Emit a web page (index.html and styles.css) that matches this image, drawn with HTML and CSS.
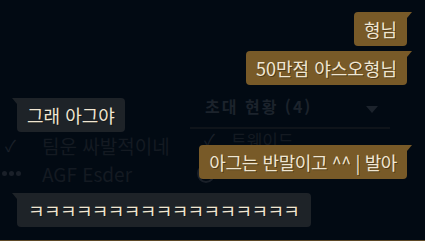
FILE: index.html
```html
<!DOCTYPE html>
<html lang="ko">
<head>
  <meta charset="UTF-8" />
  <meta name="viewport" content="width=device-width, initial-scale=1.0"/>
  <title>채팅</title>
  <link rel="stylesheet" href="styles.css">
</head>
<body>

  <div class="stage">

    <!-- 뒤에 흐릿하게 보이는 로비 화면 -->
    <div class="backdrop">
      <div class="invite">
        <span class="invite-title">초대 현황 (4)</span>
        <span class="caret"></span>
      </div>

      <div class="friends">
        <div class="friend">
          <span class="f-icon">✓</span>
          <span class="f-name">팀운 싸발적이네</span>
        </div>
        <div class="friend friend-right">
          <span class="f-icon">✓</span>
          <span class="f-name">트웨이드</span>
        </div>
        <div class="friend">
          <span class="f-icon dots"><i></i><i></i><i></i></span>
          <span class="f-name">AGF Esder</span>
        </div>
        <div class="friend friend-right second">
          <span class="f-icon"><span class="ring"></span></span>
          <span class="f-name"></span>
        </div>
      </div>
    </div>

    <!-- 채팅 말풍선 -->
    <div class="chat">
      <div class="msg me">형님</div>
      <div class="msg me">50만점 야스오형님</div>
      <div class="msg them">그래 아그야</div>
      <div class="msg me tight">아그는 반말이고 ^^ | 발아</div>
      <div class="msg them kk">ㅋㅋㅋㅋㅋㅋㅋㅋㅋㅋㅋㅋㅋㅋㅋㅋㅋ</div>
    </div>

  </div>

</body>
</html>
```

FILE: styles.css
```css
* {
  margin: 0;
  padding: 0;
  box-sizing: border-box;
  font-family: 'Noto Sans CJK KR', 'Noto Sans', sans-serif;
}

body, html {
  height: 100%;
  overflow: hidden;
  background-color: #010a13;
}

.stage {
  display: grid;
  width: 425px;
  height: 241px;
  background-color: #020a13;
  border-bottom: 1px solid #5e4a28;
}

/* 배경 로비 */
.backdrop {
  grid-area: 1 / 1;
  display: flex;
  flex-direction: column;
  padding-top: 92px;
}

.invite {
  margin-left: 190px;
  width: 200px;
  height: 37px;
  display: flex;
  align-items: flex-start;
  justify-content: space-between;
  padding: 3px 12px 0 15px;
  border-bottom: 2px solid #0f141a;
}

.invite-title {
  color: #1c232c;
  font-size: 16px;
  font-weight: bold;
  line-height: 22px;
  letter-spacing: 2px;
}

.caret {
  width: 0;
  height: 0;
  margin-top: 11px;
  border-left: 6px solid transparent;
  border-right: 6px solid transparent;
  border-top: 7px solid #1c232c;
}

.friends {
  display: grid;
  grid-template-columns: 190px 1fr;
  grid-auto-rows: 28px;
  padding-top: 2px;
}

.friend {
  display: flex;
  align-items: center;
  color: #141a22;
  font-size: 19px;
}

.f-icon {
  width: 42px;
  padding-left: 5px;
  color: #1a2029;
  font-size: 16px;
}

.dots {
  display: flex;
  gap: 2px;
  padding-left: 2px;
}

.dots i {
  width: 5px;
  height: 5px;
  border-radius: 50%;
  background-color: #1a2029;
}

.friend-right {
  margin-top: -12px;
  margin-left: 8px;
  font-size: 17px;
}

.friend-right.second {
  margin-top: 0;
}

.friend-right .f-icon {
  width: 33px;
  padding-left: 6px;
}

.ring {
  display: block;
  width: 18px;
  height: 19px;
  margin-left: -7px;
  margin-top: 0;
  border: 2px solid #1a2029;
  border-radius: 50%;
}

/* 채팅 */
.chat {
  grid-area: 1 / 1;
  display: flex;
  flex-direction: column;
  align-items: flex-start;
  padding: 12px 18px 0 17px;
}

.msg {
  position: relative;
  padding: 6px 10px;
  line-height: 22px;
  font-size: 18px;
  color: #f0e6d2;
  border-radius: 4px;
  text-shadow: 1px 1px 0 rgba(0, 0, 0, 0.35);
}

.msg + .msg {
  margin-top: 13px;
}

.me + .me {
  margin-top: 5px;
}

.me {
  align-self: flex-end;
  background-color: #785a28;
  border-top-right-radius: 0;
}

.me::before {
  content: "";
  position: absolute;
  top: 0;
  right: -5px;
  border-top: 6px solid #785a28;
  border-right: 5px solid transparent;
}

.them {
  background-color: #1e2328;
  border-top-left-radius: 0;
}

.them::before {
  content: "";
  position: absolute;
  top: 0;
  left: -5px;
  border-top: 6px solid #1e2328;
  border-left: 5px solid transparent;
}

.tight {
  letter-spacing: -0.4px;
}

.msg.kk {
  margin-top: 14px;
  padding: 6px 12px 6px 11px;
  letter-spacing: -0.6px;
}
```
